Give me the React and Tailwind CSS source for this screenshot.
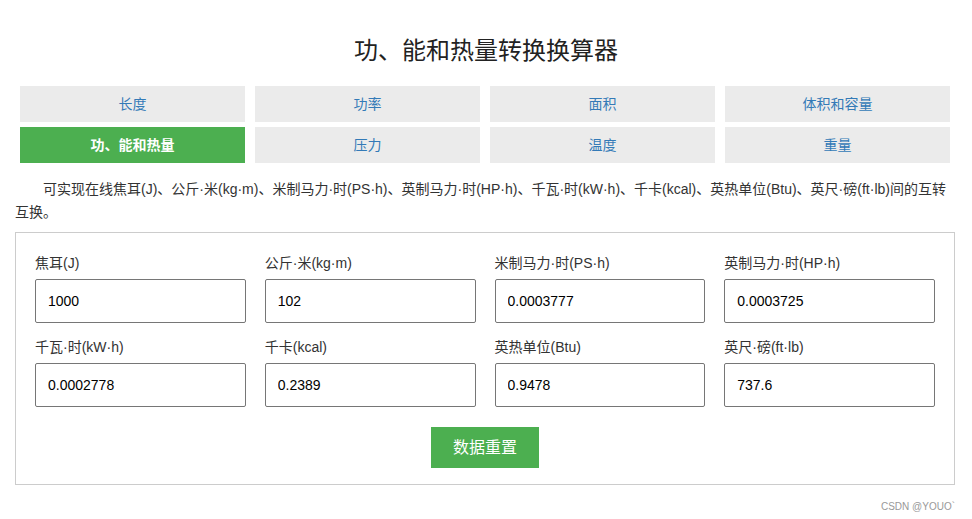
const tabs = ["长度", "功率", "面积", "体积和容量", "功、能和热量", "压力", "温度", "重量"];

const fields = [
  ["焦耳(J)", "1000"],
  ["公斤·米(kg·m)", "102"],
  ["米制马力·时(PS·h)", "0.0003777"],
  ["英制马力·时(HP·h)", "0.0003725"],
  ["千瓦·时(kW·h)", "0.0002778"],
  ["千卡(kcal)", "0.2389"],
  ["英热单位(Btu)", "0.9478"],
  ["英尺·磅(ft·lb)", "737.6"],
];

export default function App() {
  return (
    <div
      className="w-[972px] h-[519px] bg-white text-[#333] overflow-hidden"
      style={{ fontFamily: '"Liberation Sans", "Noto Sans CJK SC", sans-serif' }}
    >
      <div className="px-[15px]">
        <h1 className="pt-[35px] h-[86px] text-center text-[24px] leading-[32px] text-[#222]">
          功、能和热量转换换算器
        </h1>
        <div className="pl-[5px] pr-[7px] grid grid-cols-4 gap-x-[10px] gap-y-[5px]">
          {tabs.map((t, i) => (
            <div
              key={t}
              className={
                i === 4
                  ? "h-[36px] flex items-center justify-center text-[14px] bg-[#4caf50] text-white font-bold"
                  : "h-[36px] flex items-center justify-center text-[14px] bg-[#ebebeb] text-[#337ab7]"
              }
            >
              {t}
            </div>
          ))}
        </div>
        <p className="mt-[15px] text-[14px] leading-[23px] indent-[28px]">
          可实现在线焦耳(J)、公斤·米(kg·m)、米制马力·时(PS·h)、英制马力·时(HP·h)、千瓦·时(kW·h)、千卡(kcal)、英热单位(Btu)、英尺·磅(ft·lb)间的互转互换。
        </p>
        <div className="mt-[8px] mr-[2px] border border-[#ccc] px-[19px] pt-[20px] pb-[16px]">
          <div className="grid grid-cols-4 gap-x-[19px] gap-y-[14px]">
            {fields.map(([l, v]) => (
              <div key={l}>
                <div className="text-[14px] leading-[20px] mb-[6px]">{l}</div>
                <input
                  defaultValue={v}
                  className="w-full h-[44px] border border-[#767676] rounded-[2px] px-[12px] text-[14px] text-black outline-none"
                />
              </div>
            ))}
          </div>
          <div className="flex justify-center mt-[20px]">
            <button className="w-[108px] h-[41px] bg-[#4caf50] text-white text-[16px]">数据重置</button>
          </div>
        </div>
        <div className="flex justify-end pr-[2px] mt-[14px] text-[10px] text-[#999]">CSDN @YOUO`</div>
      </div>
    </div>
  );
}
